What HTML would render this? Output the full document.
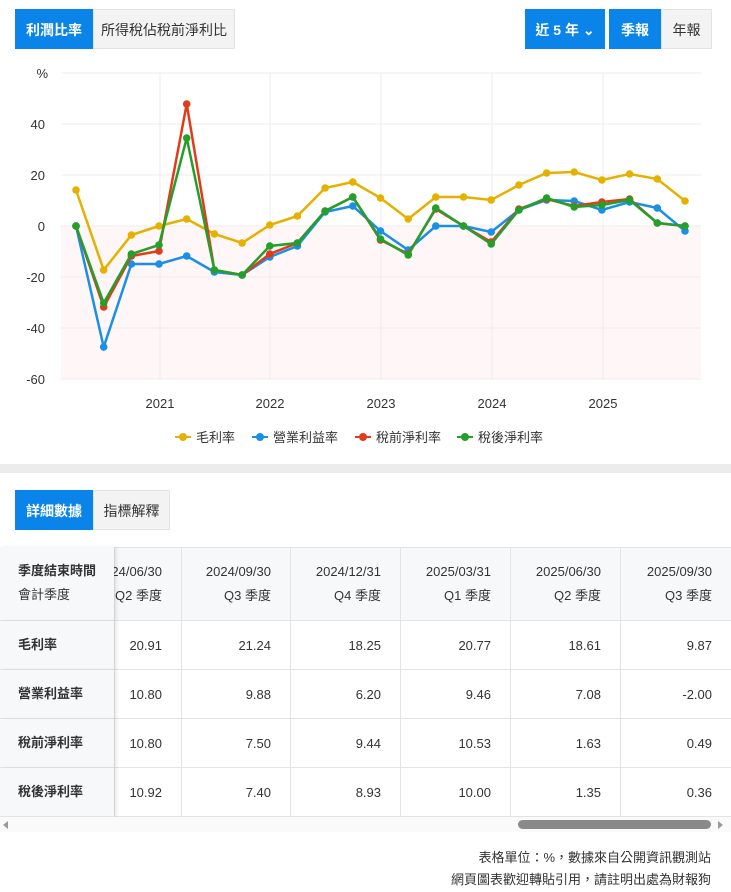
<!DOCTYPE html>
<html><head><meta charset="utf-8"><style>
*{box-sizing:border-box;margin:0;padding:0}
body{width:731px;height:892px;background:#fff;font-family:"Liberation Sans","Noto Sans CJK TC",sans-serif;position:relative;overflow:hidden;color:#333}
.btn{position:absolute;height:40px;line-height:40px;font-size:14px;text-align:center;border:1px solid #e3e3e3;background:#f3f3f3;color:#333}
.on{background:#0a84e8;color:#fff;border-color:#0a84e8;font-weight:bold}
.t{position:absolute;font-size:13px}
table{position:absolute;top:547px;left:0;width:731px;border-collapse:collapse;font-size:13px;table-layout:fixed}
td{border:1px solid #e4e4e4;height:49px;text-align:right;padding-right:19px;color:#333;white-space:nowrap;overflow:visible}
.hd td{height:73px;background:#f7f8f9;line-height:24px}
.fc{position:absolute;left:0;width:114px;background:#f7f8f9;font-weight:bold;font-size:13px;padding-left:18px;border-bottom:1px solid #e4e4e4;box-shadow:3px 0 3px rgba(0,0,0,.08);z-index:2}
</style></head><body>
<div class="btn on" style="left:15px;top:9px;width:78px">利潤比率</div>
<div class="btn" style="left:93px;top:9px;width:142px">所得稅佔稅前淨利比</div>
<div class="btn on" style="left:525px;top:9px;width:80px">近 5 年 ⌄</div>
<div class="btn on" style="left:609px;top:9px;width:52px">季報</div>
<div class="btn" style="left:661px;top:9px;width:51px">年報</div>
<svg style="position:absolute;left:0;top:60px" width="731" height="400" viewBox="0 60 731 400">
<rect x="61" y="226" width="640" height="153" fill="#fff6f8"/>
<g stroke="#ececec" stroke-width="1">
<line x1="61" y1="73" x2="701" y2="73"/><line x1="61" y1="124" x2="701" y2="124"/><line x1="61" y1="175" x2="701" y2="175"/><line x1="61" y1="226" x2="701" y2="226"/><line x1="61" y1="277" x2="701" y2="277"/><line x1="61" y1="328" x2="701" y2="328"/><line x1="61" y1="379" x2="701" y2="379"/>
<line x1="160" y1="73" x2="160" y2="379"/><line x1="270" y1="73" x2="270" y2="379"/><line x1="381" y1="73" x2="381" y2="379"/><line x1="492" y1="73" x2="492" y2="379"/><line x1="603" y1="73" x2="603" y2="379"/>
</g>
<g font-size="13" fill="#333" text-anchor="end" font-family="Liberation Sans,sans-serif">
<text x="48" y="78">%</text><text x="45" y="129">40</text><text x="45" y="180">20</text><text x="45" y="231">0</text><text x="45" y="282">-20</text><text x="45" y="333">-40</text><text x="45" y="384">-60</text></g>
<g font-size="13" fill="#333" text-anchor="middle" font-family="Liberation Sans,sans-serif">
<text x="160" y="408">2021</text><text x="270" y="408">2022</text><text x="381" y="408">2023</text><text x="492" y="408">2024</text><text x="603" y="408">2025</text></g>
<g id="g" fill="none" stroke-width="2.5"></g>
<g font-size="13" fill="#333" font-family="Liberation Sans,Noto Sans CJK TC,sans-serif">
<line x1="175" y1="437" x2="191" y2="437" stroke="#e5b100" stroke-width="2"/><circle cx="183" cy="437" r="4" fill="#e5b100"/><text x="196" y="442">毛利率</text>
<line x1="252" y1="437" x2="268" y2="437" stroke="#1a8fe6" stroke-width="2"/><circle cx="260" cy="437" r="4" fill="#1a8fe6"/><text x="273" y="442">營業利益率</text>
<line x1="355" y1="437" x2="371" y2="437" stroke="#e03c1c" stroke-width="2"/><circle cx="363" cy="437" r="4" fill="#e03c1c"/><text x="376" y="442">稅前淨利率</text>
<line x1="457" y1="437" x2="473" y2="437" stroke="#23a02b" stroke-width="2"/><circle cx="465" cy="437" r="4" fill="#23a02b"/><text x="478" y="442">稅後淨利率</text>
</g>
</svg>
<div style="position:absolute;left:0;top:464px;width:731px;height:9px;background:#ececec"></div>
<div class="btn on" style="left:15px;top:490px;width:78px">詳細數據</div>
<div class="btn" style="left:93px;top:490px;width:77px">指標解釋</div>
<table>
<colgroup><col style="width:114px"><col style="width:67px"><col style="width:109px"><col style="width:110px"><col style="width:110px"><col style="width:110px"><col style="width:111px"></colgroup>
<tr class="hd"><td></td><td><div style="margin-left:-40px">2024/06/30<br>Q2 季度</div></td><td>2024/09/30<br>Q3 季度</td><td>2024/12/31<br>Q4 季度</td><td>2025/03/31<br>Q1 季度</td><td>2025/06/30<br>Q2 季度</td><td>2025/09/30<br>Q3 季度</td></tr>
<tr><td></td><td>20.91</td><td>21.24</td><td>18.25</td><td>20.77</td><td>18.61</td><td>9.87</td></tr>
<tr><td></td><td>10.80</td><td>9.88</td><td>6.20</td><td>9.46</td><td>7.08</td><td>-2.00</td></tr>
<tr><td></td><td>10.80</td><td>7.50</td><td>9.44</td><td>10.53</td><td>1.63</td><td>0.49</td></tr>
<tr><td></td><td>10.92</td><td>7.40</td><td>8.93</td><td>10.00</td><td>1.35</td><td>0.36</td></tr>
</table>
<div class="fc" style="top:547px;height:74px;padding-top:12px;line-height:24px">季度結束時間<br><span style="font-weight:normal">會計季度</span></div>
<div class="fc" style="top:621px;height:49px;line-height:48px">毛利率</div>
<div class="fc" style="top:670px;height:49px;line-height:48px">營業利益率</div>
<div class="fc" style="top:719px;height:49px;line-height:48px">稅前淨利率</div>
<div class="fc" style="top:768px;height:49px;line-height:48px">稅後淨利率</div>
<div style="position:absolute;left:0;top:817px;width:731px;height:15px;background:#fafafa;z-index:3"></div>
<div style="position:absolute;left:3px;top:821px;width:0;height:0;border:4px solid transparent;border-right:5px solid #999;border-left:0;z-index:4"></div>
<div style="position:absolute;left:518px;top:820px;width:193px;height:9px;border-radius:5px;background:#8a8a8a;z-index:4"></div>
<div style="position:absolute;left:718px;top:821px;width:0;height:0;border:4px solid transparent;border-left:5px solid #999;border-right:0;z-index:4"></div>
<div class="t" style="right:20px;top:847px">表格單位：%，數據來自公開資訊觀測站</div>
<div class="t" style="right:20px;top:869px">網頁圖表歡迎轉貼引用，請註明出處為財報狗</div>
<script>
var d=[["#e5b100",[190,270,235,226,219,234,243,225,216,188,182,198,219,197,197,200,185,173,172,180,174,179,201]],
["#1a8fe6",[226,347,264,264,256,272,275,257,246,212,206,231,250,226,226,232,210,200,201,210,202,208,231]],
["#e03c1c",[226,307,256,251,104,270,275,254,243,211,197,240,254,209,226,242,209,199,206,202,199,223,226]],
["#23a02b",[226,303,254,245,138,270,275,246,243,211,197,239,255,208,226,244,210,198,207,205,200,223,226]]];
var s="";d.forEach(function(a){var p=a[1].map(function(y,i){return (76+i*27.68).toFixed(1)+","+y}).join(" ");
s+='<polyline points="'+p+'" stroke="'+a[0]+'"/>';a[1].forEach(function(y,i){s+='<circle cx="'+(76+i*27.68).toFixed(1)+'" cy="'+y+'" r="3.8" fill="'+a[0]+'" stroke="none"/>'});});
document.getElementById("g").innerHTML=s;
</script>
</body></html>
